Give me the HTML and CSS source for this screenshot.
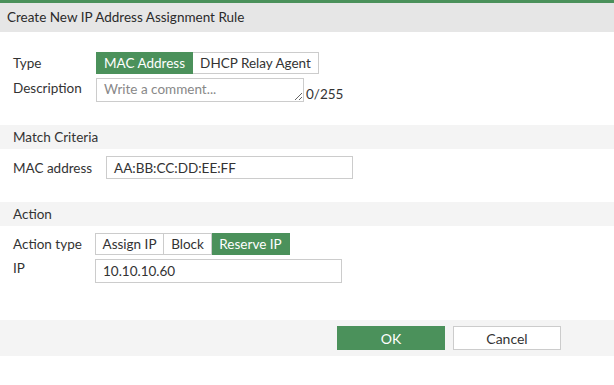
FILE: index.html
```html
<!DOCTYPE html>
<html>
<head>
<meta charset="utf-8">
<link rel="stylesheet" href="styles.css">
</head>
<body>
<div class="dialog">
  <div class="topbar"></div>
  <div class="header">Create New IP Address Assignment Rule</div>

  <div class="section s1">
    <div class="row">
      <div class="label">Type</div>
      <div class="toggle">
        <span class="tbtn on w-mac">MAC Address</span>
        <span class="tbtn w-dhcp">DHCP Relay Agent</span>
      </div>
    </div>
    <div class="row row-desc">
      <div class="label label-desc">Description</div>
      <textarea class="textarea" placeholder="Write a comment..."></textarea>
      <span class="counter">0/255</span>
    </div>
  </div>

  <div class="band">Match Criteria</div>

  <div class="section s2">
    <div class="row">
      <div class="label label-mac">MAC address</div>
      <div class="input input-mac">AA:BB:CC:DD:EE:FF</div>
    </div>
  </div>

  <div class="band">Action</div>

  <div class="section s3">
    <div class="row">
      <div class="label label-act">Action type</div>
      <div class="toggle">
        <span class="tbtn w-assign">Assign IP</span>
        <span class="tbtn w-block">Block</span>
        <span class="tbtn on w-reserve">Reserve IP</span>
      </div>
    </div>
    <div class="row row-ip">
      <div class="label label-act label-ip">IP</div>
      <div class="input input-ip">10.10.10.60</div>
    </div>
  </div>

  <div class="footer">
    <button class="btn btn-ok">OK</button>
    <button class="btn btn-cancel">Cancel</button>
  </div>
</div>
</body>
</html>
```

FILE: styles.css
```css
* { box-sizing: border-box; }
html, body {
  margin: 0;
  padding: 0;
  background: #fff;
}
body {
  font-family: Lato, "Open Sans", sans-serif;
  font-size: 13.5px;
  color: #333;
}
.dialog {
  width: 614px;
  display: flex;
  flex-direction: column;
}
.topbar {
  height: 3px;
  background: #4b915b;
}
.header {
  height: 29px;
  background: #e6e6e6;
  padding-left: 7px;
  line-height: 29px;
  font-size: 13.5px;
  color: #2b2b2b;
}
.section {
  display: flex;
  flex-direction: column;
  gap: 4px;
  padding-left: 13px;
}
.s1 { padding-top: 20px; padding-bottom: 23px; }
.s2 { padding-top: 7px; padding-bottom: 23px; }
.s3 { padding-top: 7px; padding-bottom: 37px; }
.row {
  display: flex;
  align-items: center;
}
.label {
  width: 83px;
  flex: none;
  color: #333;
}
.label-mac { width: 93px; }
.label-act { width: 82px; }
.row-desc { align-items: flex-end; }
.label-desc { align-self: flex-start; padding-top: 2px; }
.label-ip { align-self: flex-start; padding-top: 1px; }
.toggle {
  display: flex;
  height: 22px;
}
.tbtn {
  display: flex;
  align-items: center;
  justify-content: center;
  height: 22px;
  border: 1px solid #ccc;
  background: #fff;
  color: #333;
  font-size: 13.5px;
}
.tbtn + .tbtn { border-left: none; }
.tbtn.on {
  background: #4b915b;
  border-color: #4b915b;
  color: #fff;
}
.w-mac { width: 97px; }
.w-dhcp { width: 126px; }
.w-assign { width: 69px; }
.w-block { width: 48px; }
.w-reserve { width: 78px; }
.textarea {
  width: 208px;
  height: 24px;
  border: 1px solid #ccc;
  padding: 2px 7px;
  font-family: Lato, "Open Sans", sans-serif;
  font-size: 13.5px;
  line-height: 17px;
  color: #333;
  resize: vertical;
  outline: none;
  margin: 0;
  overflow: hidden;
}
.textarea::placeholder { color: #888; }
.counter {
  margin-left: 2px;
  line-height: 15px;
  color: #333;
}
.input {
  height: 23px;
  border: 1px solid #ccc;
  display: flex;
  align-items: center;
  padding-left: 7px;
  color: #333;
}
.input-mac { width: 247px; }
.input-ip { width: 247px; height: 24px; }
.band {
  height: 24px;
  background: #f4f4f4;
  padding-left: 13px;
  line-height: 24px;
  color: #333;
}
.footer {
  height: 36px;
  background: #f4f4f4;
  display: flex;
  align-items: center;
  justify-content: flex-end;
  gap: 8px;
  padding-right: 53px;
}
.btn {
  width: 108px;
  height: 24px;
  font-family: Lato, "Open Sans", sans-serif;
  font-size: 14px;
  padding: 0;
  margin: 0;
  cursor: pointer;
}
.btn-ok {
  background: #4b915b;
  border: 1px solid #4b915b;
  color: #fff;
}
.btn-cancel {
  background: #fff;
  border: 1px solid #ccc;
  color: #333;
}
```
